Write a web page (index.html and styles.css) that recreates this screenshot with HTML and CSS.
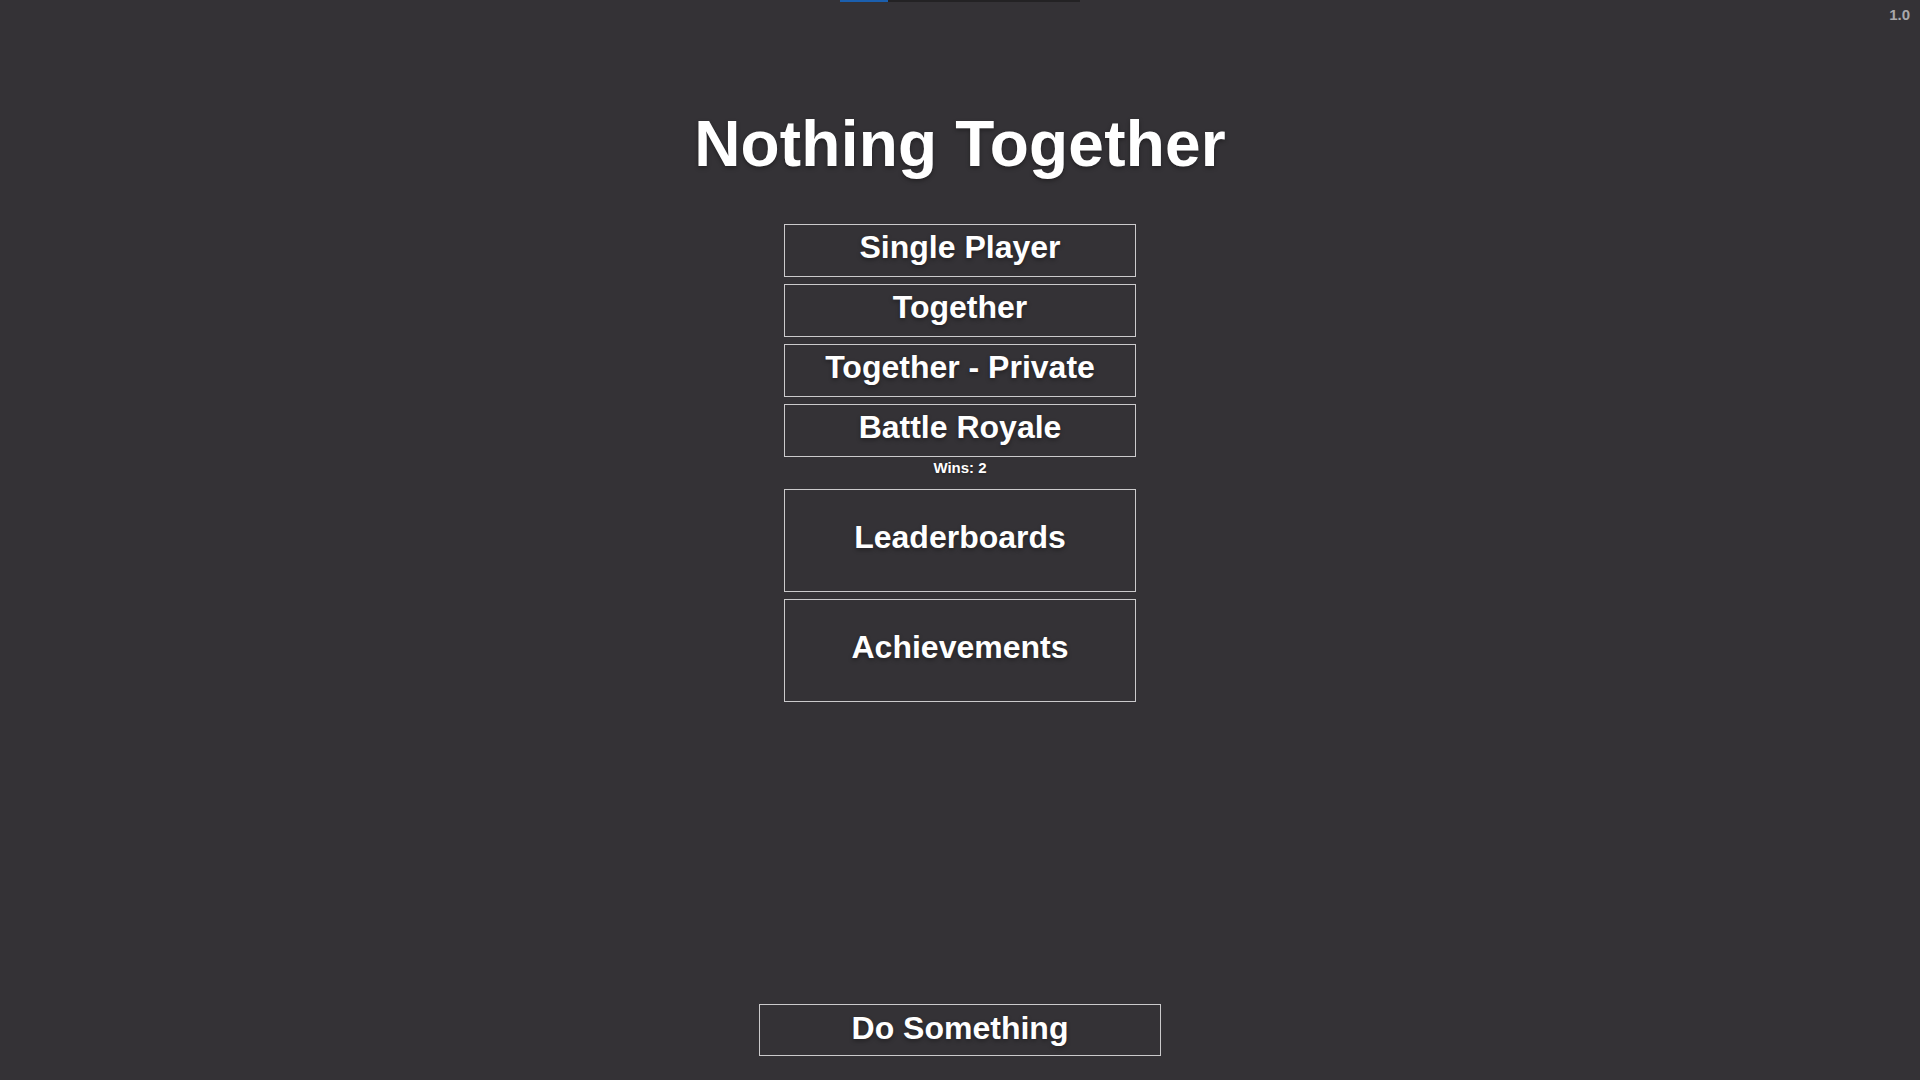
FILE: index.html
```html
<!DOCTYPE html>
<html lang="en">
<head>
  <meta charset="UTF-8" />
  <meta name="viewport" content="width=device-width,initial-scale=1" />
  <title>Nothing Together</title>
  <link rel="stylesheet" href="styles.css">
</head>
<body>
  <div class="top-line">
    <div></div>
    <div class="progress"><div class="progress-fill"></div></div>
    <div class="version">1.0</div>
  </div>

  <h1 class="title">Nothing Together</h1>

  <div class="menu">
    <button class="menu-btn">Single Player</button>
    <button class="menu-btn">Together</button>
    <button class="menu-btn">Together - Private</button>
    <button class="menu-btn">Battle Royale</button>
    <p class="wins">Wins: 2</p>
    <button class="menu-btn big">Leaderboards</button>
    <button class="menu-btn big">Achievements</button>
  </div>

  <div class="footer">
    <button class="do-btn">Do Something</button>
  </div>
</body>
</html>
```

FILE: styles.css
```css
html, body {
  height: 100%;
}
body {
  margin: 0;
  display: flex;
  flex-direction: column;
  align-items: center;
  background: #343236;
  color: #fff;
  font-family: "Liberation Sans", Arial, sans-serif;
  font-weight: bold;
}
.top-line {
  width: 100%;
  height: 24px;
  display: grid;
  grid-template-columns: 1fr 240px 1fr;
  align-items: start;
}
.progress {
  height: 2px;
  background: #232224;
}
.progress-fill {
  width: 48px;
  height: 100%;
  background: #1b5fae;
}
.version {
  justify-self: end;
  padding: 6px 10px 0 0;
  font-size: 15px;
  color: #a9a8aa;
}
.title {
  margin: 88px 0 0;
  font-size: 64px;
  line-height: 64px;
  letter-spacing: 0.2px;
  text-shadow: 0 2px 4px rgba(0, 0, 0, 0.35);
}
.menu {
  margin-top: 48px;
  display: flex;
  flex-direction: column;
  align-items: center;
}
button {
  font-family: inherit;
  font-weight: bold;
  color: #fff;
  background: transparent;
  cursor: pointer;
  box-sizing: border-box;
  border: 1px solid #cbcacc;
  border-radius: 0;
  padding: 0;
  text-shadow: 0 2px 4px rgba(0, 0, 0, 0.35);
}
.menu-btn {
  width: 352px;
  height: 53px;
  margin-top: 7px;
  padding-bottom: 7px;
  font-size: 32px;
  line-height: 32px;
}
.menu-btn:first-child {
  margin-top: 0;
}
.menu-btn.big {
  height: 103px;
}
.wins {
  margin: 2px 0 5px;
  font-size: 15px;
  line-height: 18px;
  text-shadow: 0 1px 3px rgba(0, 0, 0, 0.35);
}
.footer {
  margin-top: auto;
  padding-bottom: 24px;
}
.do-btn {
  width: 402px;
  height: 52px;
  padding-bottom: 5px;
  font-size: 32px;
  line-height: 32px;
}
```
